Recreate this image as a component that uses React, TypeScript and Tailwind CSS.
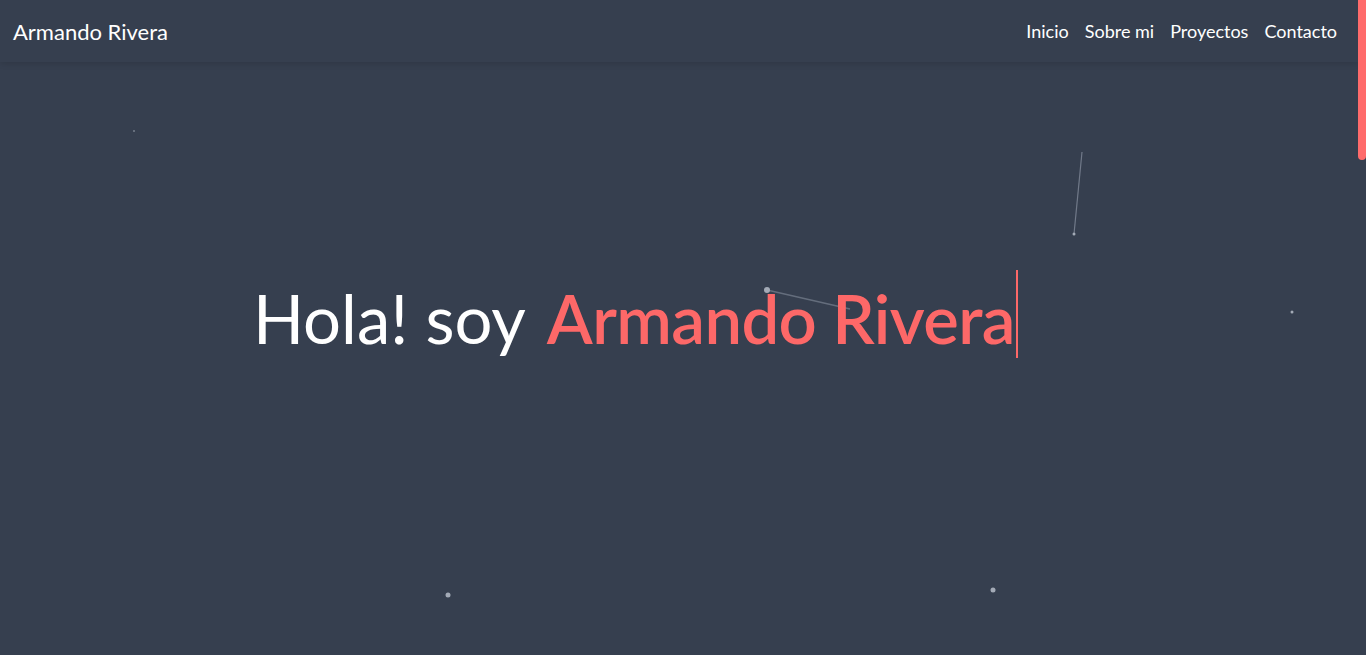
import React from "react";

const font = { fontFamily: 'Lato, "Noto Sans", sans-serif' };

function Particles() {
  return (
    <svg className="absolute left-0 top-0 pointer-events-none" width="1358" height="655">
      <line x1="767" y1="290" x2="850" y2="309" stroke="#8a93a3" strokeOpacity="0.55" strokeWidth="1.5" />
      <line x1="1074" y1="234" x2="1082" y2="152" stroke="#8a93a3" strokeOpacity="0.7" strokeWidth="1.2" />
      <circle cx="767" cy="290" r="3" fill="#a3aab6" />
      <circle cx="1074" cy="234" r="1.5" fill="#a3aab6" />
      <circle cx="1292" cy="312" r="1.5" fill="#a3aab6" />
      <circle cx="448" cy="595" r="2.5" fill="#a3aab6" />
      <circle cx="993" cy="590" r="2.5" fill="#a3aab6" />
      <circle cx="134" cy="131" r="0.8" fill="#a3aab6" />
    </svg>
  );
}

export default function App() {
  return (
    <div className="relative h-screen w-full overflow-hidden bg-[#363f4f] text-white" style={font}>
      <Particles />
      <div className="relative mr-[8px] flex h-full flex-col">
        <header className="flex h-[62px] shrink-0 items-center justify-between bg-[#363f4f] pl-[13px] pr-[21px] shadow-[0_2px_6px_rgba(0,0,0,0.12)]">
          <div className="text-[22px] text-white">Armando Rivera</div>
          <nav className="flex gap-[16px] text-[18px] text-white">
            <a>Inicio</a>
            <a>Sobre mi</a>
            <a>Proyectos</a>
            <a>Contacto</a>
          </nav>
        </header>
        <section className="flex flex-1 items-start pl-[253px] pt-[208px]">
          <h1 className="flex h-[88px] items-center text-[67px] leading-none">
            <span className="mt-[8px] text-white">Hola! soy</span>
            <span className="ml-[21px] mt-[8px] tracking-[-0.6px] text-[#fd6868] font-semibold">Armando Rivera</span>
            <span className="ml-[1px] inline-block h-[88px] w-[2px] bg-[#fd6868]" />
          </h1>
        </section>
      </div>
      <div className="absolute right-0 top-0 h-[160px] w-[8px] rounded-b-full bg-[#ff6b6b]" />
    </div>
  );
}
